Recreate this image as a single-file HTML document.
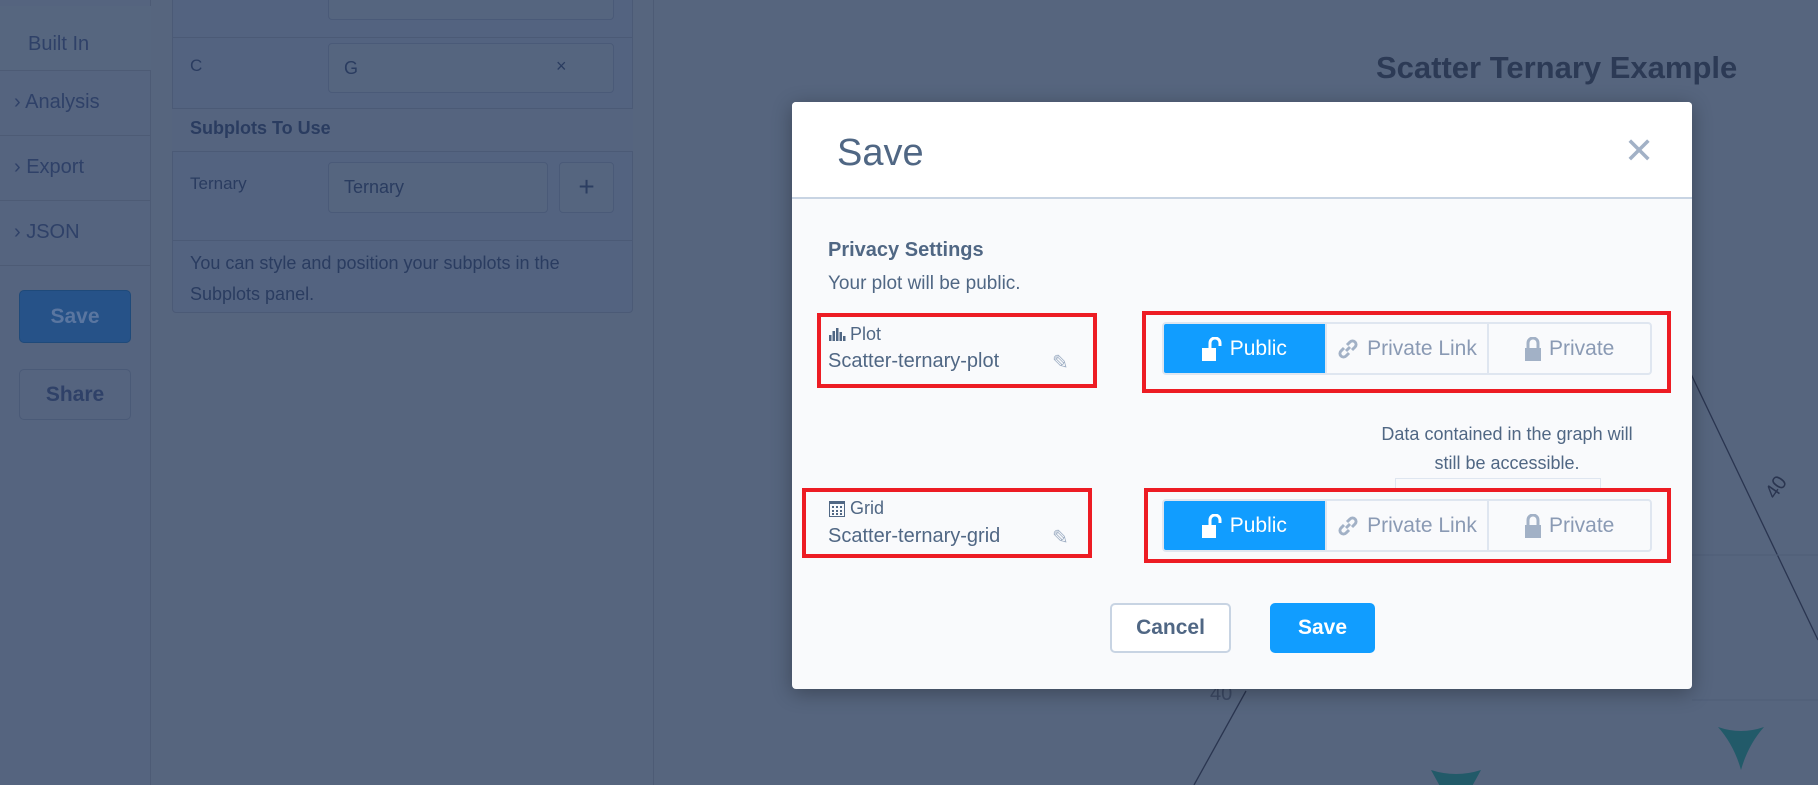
<!DOCTYPE html>
<html><head><meta charset="utf-8"><style>
*{box-sizing:border-box;margin:0;padding:0}
body{width:1818px;height:785px;overflow:hidden;background:#56657e;font-family:"Liberation Sans",sans-serif;position:relative;color:#2a3f5f}
.a{position:absolute}
.side{left:0;top:0;width:151px;height:785px;background:#55647f;border-right:1px solid #4d5b75}
.si{left:0;width:151px;height:65px;border-bottom:1px solid #4d5b75;color:#2f4168;font-size:20px}
.panel{left:172px;top:-5px;width:461px;height:318px;border:1px solid #4b5a76;border-radius:4px;background:#536380}
.inp{border:1px solid #4a5a78;border-radius:4px;background:#55657f}
.t{color:#2a3c60}
.modal{left:792px;top:102px;width:900px;height:587px;background:#f9fafc;border-radius:4px;box-shadow:0 4px 20px rgba(0,0,0,.3);overflow:hidden}
.mh{left:0;top:0;width:900px;height:97px;background:#fff;border-bottom:2px solid #c8d4e3}
.red{border:4px solid #ed1c24}
.grp{display:flex;height:53px;width:490px;border:2px solid #dfe6f0;border-radius:4px;background:#f9fafc;overflow:hidden}
.grp div{flex:1;display:flex;align-items:center;justify-content:center;font-size:21px;color:#8a9ab4;gap:8px}
.grp .on{background:#119dff;color:#fff}
.grp div+div{border-left:2px solid #dfe6f0}
.btn{height:50px;border-radius:5px;display:flex;align-items:center;justify-content:center;font-size:21px;font-weight:bold}
</style></head><body>
<svg class="a" style="left:0;top:0" width="1818" height="785">
<line x1="1670" y1="330" x2="1818" y2="640" stroke="#2a3550" stroke-width="1.3"/>
<line x1="1246" y1="691" x2="1194" y2="785" stroke="#2a3550" stroke-width="1.3"/>
<line x1="1692" y1="555" x2="1818" y2="555" stroke="#4e5d77"/>
<line x1="1692" y1="700" x2="1818" y2="700" stroke="#4e5d77"/>
<path d="M1718,727 Q1741,735 1764,727 Q1748,745 1741,770 Q1734,745 1718,727Z" fill="#225a69"/>
<path d="M1431,770 Q1456,778 1481,770 L1470,790 L1442,790Z" fill="#225a69"/>
<text x="1775" y="500" fill="#2a3550" font-size="20" transform="rotate(-55 1775 500)" font-family="Liberation Sans">40</text>
<text x="1210" y="700" fill="#3c4a65" font-size="20" font-family="Liberation Sans">40</text>
</svg>
<div class="a side"></div>
<div class="a si" style="top:6px;background:#56667f;padding:27px 0 0 28px">Built In</div>
<div class="a si" style="top:71px;padding:20px 0 0 14px">› Analysis</div>
<div class="a si" style="top:136px;padding:20px 0 0 14px">› Export</div>
<div class="a si" style="top:201px;padding:20px 0 0 14px">› JSON</div>
<div class="a btn" style="left:19px;top:290px;width:112px;height:53px;background:#265288;color:#5a76a0;border:1px solid #1f4a7a">Save</div>
<div class="a btn" style="left:19px;top:369px;width:112px;height:51px;border:1px solid #4a5a77;color:#2f4168">Share</div>
<div class="a" style="left:653px;top:0;width:1px;height:785px;background:#4d5b75"></div>
<div class="a panel"></div>
<div class="a inp" style="left:328px;top:-10px;width:286px;height:30px"></div>
<div class="a" style="left:172px;top:37px;width:461px;height:1px;background:#4b5a76"></div>
<div class="a t" style="left:190px;top:56px;font-size:17px">C</div>
<div class="a inp" style="left:328px;top:43px;width:286px;height:50px"></div>
<div class="a t" style="left:344px;top:58px;font-size:18px">G</div>
<div class="a t" style="left:556px;top:56px;font-size:18px">×</div>
<div class="a" style="left:172px;top:108px;width:461px;height:44px;background:#55647f;border-top:1px solid #4b5a76;border-bottom:1px solid #4b5a76"></div>
<div class="a t" style="left:190px;top:118px;font-size:18px;font-weight:bold">Subplots To Use</div>
<div class="a t" style="left:190px;top:174px;font-size:17px">Ternary</div>
<div class="a inp" style="left:328px;top:162px;width:220px;height:51px"></div>
<div class="a t" style="left:344px;top:177px;font-size:18px">Ternary</div>
<div class="a inp" style="left:559px;top:162px;width:55px;height:51px;font-size:28px;text-align:center;line-height:48px;color:#2c3e62">+</div>
<div class="a" style="left:172px;top:240px;width:461px;height:1px;background:#4b5a76"></div>
<div class="a t" style="left:190px;top:248px;font-size:18px;line-height:31px;width:440px">You can style and position your subplots in the Subplots panel.</div>
<div class="a" style="left:1376px;top:50px;font-size:31px;font-weight:bold;color:#2c3a55">Scatter Ternary Example</div>

<div class="a modal">
<div class="a mh"></div>
<div class="a" style="left:45px;top:30px;font-size:38px;color:#506784">Save</div>
<div class="a" style="left:832px;top:28px;font-size:36px;color:#a2b1c6">✕</div>
<div class="a" style="left:36px;top:137px;font-size:20px;font-weight:bold;color:#506784">Privacy Settings</div>
<div class="a" style="left:36px;top:171px;font-size:19px;color:#506784">Your plot will be public.</div>
<div class="a red" style="left:25px;top:211px;width:280px;height:75px"></div>
<svg class="a" style="left:37px;top:225px" width="18" height="14"><g fill="#506784"><rect x="0" y="8" width="2.5" height="6"/><rect x="3.5" y="4" width="2.5" height="10"/><rect x="7" y="1" width="2.5" height="13"/><rect x="10.5" y="5" width="2.5" height="9"/><rect x="14" y="9" width="2.5" height="5"/></g></svg>
<div class="a" style="left:58px;top:222px;font-size:18px;color:#506784">Plot</div>
<div class="a" style="left:36px;top:248px;font-size:20px;color:#506784">Scatter-ternary-plot</div>
<div class="a" style="left:260px;top:248px;font-size:20px;color:#a2b1c6">✎</div>
<div class="a red" style="left:350px;top:209px;width:529px;height:82px"></div>
<div class="a grp" style="left:370px;top:220px">
<div class="on"><svg width="20" height="24" viewBox="0 0 20 24"><rect x="0" y="11" width="14" height="13" fill="#fff"/><path d="M8,11 V6 a5,5 0 0 1 10,0 V9" stroke="#fff" stroke-width="3" fill="none"/></svg>Public</div>
<div><svg width="22" height="22" viewBox="0 0 22 22" fill="none" stroke="#a2b1c6" stroke-width="3"><path d="M9,13 L13,9"/><path d="M7,10 L4,13 a3.5,3.5 0 0 0 5,5 L12,15"/><path d="M10,7 L13,4 a3.5,3.5 0 0 1 5,5 L15,12"/></svg>Private Link</div>
<div><svg width="16" height="24" viewBox="0 0 16 24"><rect x="0" y="11" width="16" height="13" fill="#a2b1c6"/><path d="M3,11 V6 a5,5 0 0 1 10,0 V11" stroke="#a2b1c6" stroke-width="3" fill="none"/></svg>Private</div></div>
<div class="a" style="left:585px;top:318px;width:260px;text-align:center;font-size:18px;line-height:29px;color:#506784">Data contained in the graph will still be accessible.</div>
<div class="a" style="left:603px;top:376px;width:206px;height:12px;border:1px solid #dfe6f0;border-bottom:none"></div>
<div class="a red" style="left:10px;top:386px;width:290px;height:70px"></div>
<svg class="a" style="left:37px;top:399px" width="16" height="16"><rect x="0.5" y="0.5" width="15" height="15" fill="none" stroke="#506784"/><g fill="#506784"><rect x="0" y="0" width="16" height="3"/><rect x="3" y="5" width="2" height="2"/><rect x="7" y="5" width="2" height="2"/><rect x="11" y="5" width="2" height="2"/><rect x="3" y="9" width="2" height="2"/><rect x="7" y="9" width="2" height="2"/><rect x="11" y="9" width="2" height="2"/><rect x="3" y="12" width="2" height="2"/><rect x="7" y="12" width="2" height="2"/><rect x="11" y="12" width="2" height="2"/></g></svg>
<div class="a" style="left:58px;top:396px;font-size:18px;color:#506784">Grid</div>
<div class="a" style="left:36px;top:423px;font-size:20px;color:#506784">Scatter-ternary-grid</div>
<div class="a" style="left:260px;top:423px;font-size:20px;color:#a2b1c6">✎</div>
<div class="a red" style="left:352px;top:386px;width:527px;height:75px"></div>
<div class="a grp" style="left:370px;top:397px">
<div class="on"><svg width="20" height="24" viewBox="0 0 20 24"><rect x="0" y="11" width="14" height="13" fill="#fff"/><path d="M8,11 V6 a5,5 0 0 1 10,0 V9" stroke="#fff" stroke-width="3" fill="none"/></svg>Public</div>
<div><svg width="22" height="22" viewBox="0 0 22 22" fill="none" stroke="#a2b1c6" stroke-width="3"><path d="M9,13 L13,9"/><path d="M7,10 L4,13 a3.5,3.5 0 0 0 5,5 L12,15"/><path d="M10,7 L13,4 a3.5,3.5 0 0 1 5,5 L15,12"/></svg>Private Link</div>
<div><svg width="16" height="24" viewBox="0 0 16 24"><rect x="0" y="11" width="16" height="13" fill="#a2b1c6"/><path d="M3,11 V6 a5,5 0 0 1 10,0 V11" stroke="#a2b1c6" stroke-width="3" fill="none"/></svg>Private</div></div>
<div class="a btn" style="left:318px;top:501px;width:121px;border:2px solid #c8d4e3;background:#fff;color:#506784">Cancel</div>
<div class="a btn" style="left:478px;top:501px;width:105px;background:#119dff;color:#fff">Save</div>
</div>
</body></html>
